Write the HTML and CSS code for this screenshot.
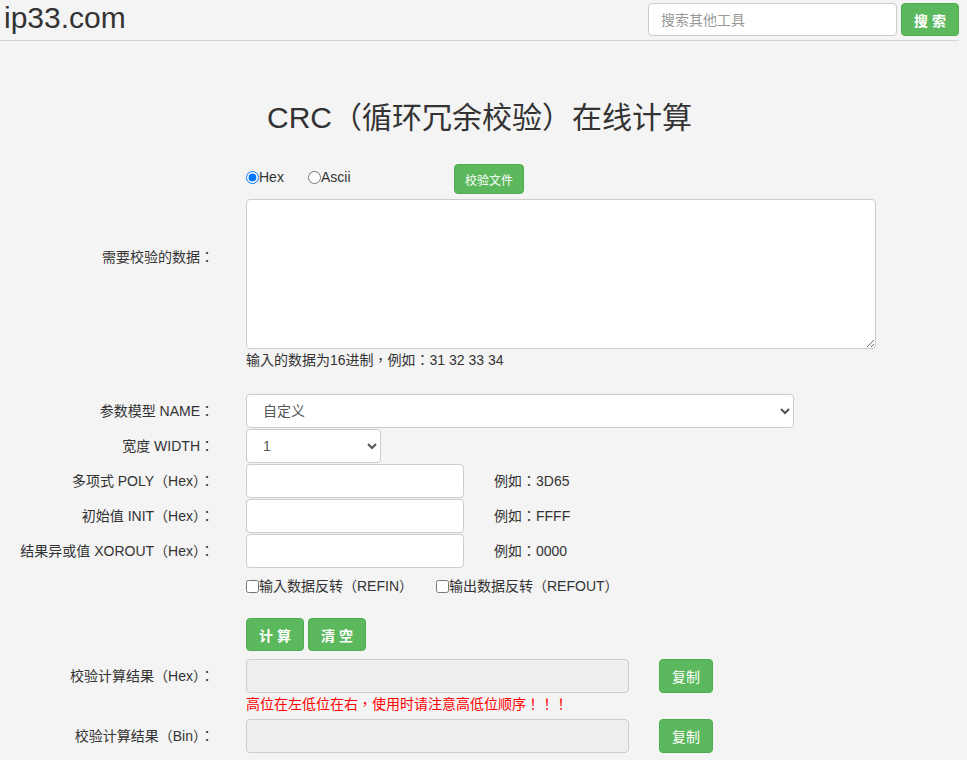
FILE: index.html
```html
<!DOCTYPE html>
<html lang="zh-TW">
<head>
    <meta charset="UTF-8">
    <meta name="viewport" content="width=device-width, initial-scale=1.0">
    <title>CRC（循环冗余校验）在线计算</title>
    <link rel="stylesheet" href="styles.css">
</head>
<body>
    <div class="page">
        <header class="topbar">
            <a class="logo" href="#">ip33.com</a>
            <form class="search">
                <input type="text" class="search-input" placeholder="搜索其他工具">
                <button type="button" class="btn btn-search">搜 索</button>
            </form>
        </header>

        <h1 class="title">CRC（循环冗余校验）在线计算</h1>

        <div class="calc">
            <div class="row row-data">
                <label class="label">需要校验的数据：</label>
                <div class="field">
                    <div class="mode">
                        <label class="radio radio-hex"><input type="radio" name="mode" checked>Hex</label>
                        <label class="radio radio-ascii"><input type="radio" name="mode">Ascii</label>
                        <button type="button" class="btn btn-file">校验文件</button>
                    </div>
                    <textarea class="data"></textarea>
                </div>
            </div>
            <div class="row row-note">
                <span class="label"></span>
                <div class="field hint">输入的数据为16进制，例如：31 32 33 34</div>
            </div>

            <div class="row row-name">
                <label class="label">参数模型 NAME：</label>
                <div class="field">
                    <select class="control select-name">
                        <option>自定义</option>
                    </select>
                </div>
            </div>
            <div class="row">
                <label class="label">宽度 WIDTH：</label>
                <div class="field">
                    <select class="control select-width">
                        <option>1</option>
                    </select>
                </div>
            </div>
            <div class="row">
                <label class="label">多项式 POLY（Hex）：</label>
                <div class="field">
                    <input type="text" class="control param">
                    <span class="example">例如：3D65</span>
                </div>
            </div>
            <div class="row">
                <label class="label">初始值 INIT（Hex）：</label>
                <div class="field">
                    <input type="text" class="control param">
                    <span class="example">例如：FFFF</span>
                </div>
            </div>
            <div class="row">
                <label class="label">结果异或值 XOROUT（Hex）：</label>
                <div class="field">
                    <input type="text" class="control param">
                    <span class="example">例如：0000</span>
                </div>
            </div>
            <div class="row row-check">
                <span class="label"></span>
                <div class="field">
                    <label class="check check-in"><input type="checkbox">输入数据反转（REFIN）</label>
                    <label class="check"><input type="checkbox">输出数据反转（REFOUT）</label>
                </div>
            </div>
            <div class="row row-actions">
                <span class="label"></span>
                <div class="field">
                    <button type="button" class="btn btn-action">计 算</button>
                    <button type="button" class="btn btn-action">清 空</button>
                </div>
            </div>

            <div class="row row-result">
                <label class="label">校验计算结果（Hex）：</label>
                <div class="field">
                    <input type="text" class="control result" readonly>
                    <button type="button" class="btn btn-copy">复制</button>
                </div>
            </div>
            <div class="row row-note">
                <span class="label"></span>
                <div class="field warn">高位在左低位在右，使用时请注意高低位顺序！！！</div>
            </div>
            <div class="row row-result">
                <label class="label">校验计算结果（Bin）：</label>
                <div class="field">
                    <input type="text" class="control result" readonly>
                    <button type="button" class="btn btn-copy">复制</button>
                </div>
            </div>
        </div>
    </div>
</body>
</html>
```

FILE: styles.css
```css
body {
    margin: 0;
    background-color: #f4f4f4;
    color: #333;
    font-family: "Liberation Sans", "Noto Sans CJK TC", sans-serif;
    font-size: 14px;
    line-height: 20px;
}

.page {
    width: 959px;
}

/* top bar */
.topbar {
    display: flex;
    align-items: flex-start;
    height: 40px;
    border-bottom: 1px solid #d4d4d4;
}

.logo {
    padding-left: 4px;
    font-size: 30px;
    line-height: 36px;
    color: #333;
    text-decoration: none;
}

.search {
    display: flex;
    margin: 3px 0 0 auto;
}

.search-input {
    box-sizing: border-box;
    width: 249px;
    height: 33px;
    padding: 6px 12px;
    border: 1px solid #ccc;
    border-radius: 4px;
    background: #fff;
    font: inherit;
    color: #555;
}

.search-input::placeholder {
    color: #999;
}

.btn {
    box-sizing: border-box;
    border: 1px solid #4cae4c;
    border-radius: 4px;
    background-color: #5cb85c;
    color: #fff;
    font-family: inherit;
    font-size: 14px;
    cursor: pointer;
    padding: 0;
}

.btn-search {
    width: 58px;
    height: 33px;
    margin-left: 4px;
    font-weight: bold;
}

/* title */
.title {
    margin: 57px 0 26px;
    font-size: 30px;
    line-height: 40px;
    font-weight: normal;
    text-align: center;
}

/* form rows */
.row {
    display: flex;
    align-items: center;
    margin-bottom: 1px;
}

.label {
    flex: 0 0 214px;
    text-align: right;
}

.field {
    display: flex;
    align-items: center;
    margin-left: 32px;
}

.row-data .field {
    flex-direction: column;
    align-items: flex-start;
    gap: 5px;
}

.mode {
    display: flex;
    align-items: center;
    height: 30px;
}

.radio {
    display: flex;
    align-items: center;
    margin-top: -4px;
}

.radio input {
    width: 13px;
    height: 13px;
    margin: 0;
}

.radio-hex {
    width: 62px;
}

.radio-ascii {
    width: 146px;
}

.btn-file {
    width: 70px;
    height: 30px;
    font-size: 12px;
}

.data {
    box-sizing: border-box;
    width: 630px;
    height: 150px;
    margin: 0;
    border: 1px solid #ccc;
    border-radius: 4px;
    background: #fff;
}

.row-note {
    margin-bottom: 0;
}

.hint {
    height: 20px;
    margin-bottom: 24px;
}

.warn {
    color: #f00;
    margin-bottom: 5px;
}

.control {
    box-sizing: border-box;
    height: 34px;
    margin: 0;
    padding: 6px 12px;
    border: 1px solid #ccc;
    border-radius: 4px;
    background-color: #fff;
    font-family: inherit;
    font-size: 14px;
    color: #555;
}

.select-name {
    width: 548px;
}

.select-width {
    width: 135px;
}

.param {
    width: 218px;
}

.example {
    margin-left: 30px;
}

.row-check .field {
    height: 34px;
}

.check {
    display: flex;
    align-items: center;
}

.check input {
    width: 13px;
    height: 13px;
    margin: 0;
}

.check-in {
    margin-right: 23px;
}

.row-actions {
    margin: 15px 0 8px;
}

.btn-action {
    width: 58px;
    height: 33px;
    margin-right: 4px;
    font-weight: bold;
    font-size: 14px;
}

.result {
    width: 383px;
    background-color: #eee;
}

.btn-copy {
    width: 54px;
    height: 34px;
    margin-left: 30px;
}
```
